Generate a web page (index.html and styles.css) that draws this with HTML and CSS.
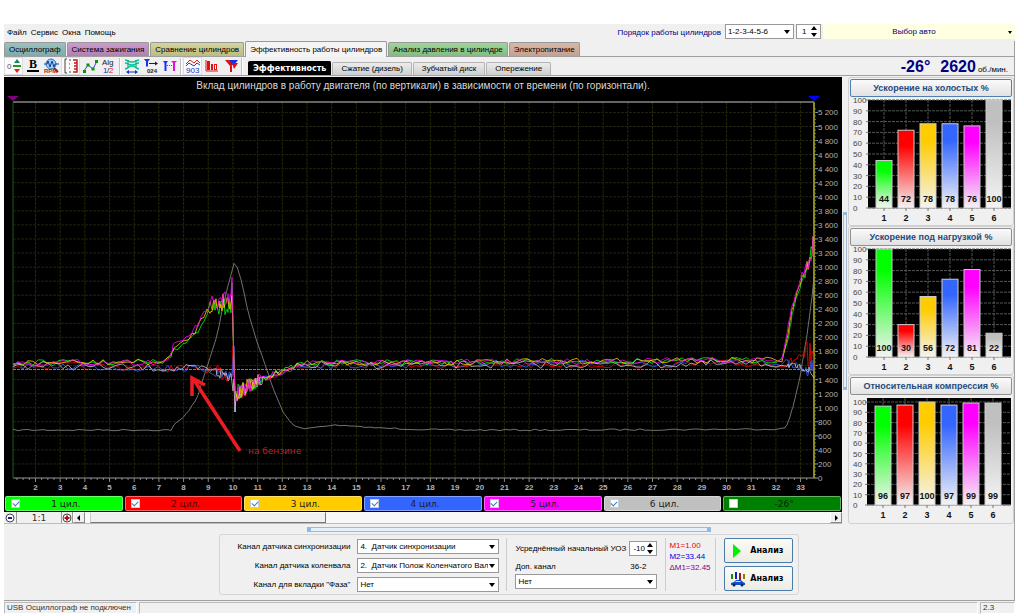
FILE: index.html
```
<!DOCTYPE html>
<html lang="ru">
<head>
  <meta charset="UTF-8">
  <title>USB Осциллограф</title>
  <link rel="stylesheet" href="styles.css">
</head>
<body>
  <div class="app">
    <header class="menubar">
      <nav class="menu">
        <a href="#">Файл</a>
        <a href="#">Сервис</a>
        <a href="#">Окна</a>
        <a href="#">Помощь</a>
      </nav>
      <label class="order-label" for="order">Порядок работы цилиндров</label>
      <span class="select order"><select id="order"><option>1-2-3-4-5-6</option></select></span>
      <span class="spin first"><input id="first" type="text" value="1" aria-label="Первый цилиндр"></span>
      <span class="select car"><select id="car" aria-label="Выбор авто"><option>Выбор авто</option></select></span>
    </header>

    <div class="tabs">
      <button type="button" class="tab teal">Осциллограф</button>
      <button type="button" class="tab violet">Система зажигания</button>
      <button type="button" class="tab olive">Сравнение цилиндров</button>
      <button type="button" class="tab current">Эффективность работы цилиндров</button>
      <button type="button" class="tab green">Анализ давления в цилиндре</button>
      <button type="button" class="tab brown">Электропитание</button>
    </div>

    <div class="toolbar">
      <div class="tools">
        <button type="button" class="tool pressed" aria-label="Ноль">
          <svg viewBox="0 0 16 16"><text x="1" y="11" class="ico-text" fill="#555">0</text><path d="M7 8h8" stroke="#18a018" stroke-width="2"/><path d="M11 1l3 4h-6z" fill="#208060"/><path d="M11 15l3-4h-6z" fill="#e02020"/></svg>
        </button>
        <button type="button" class="tool" aria-label="Жирные линии">
          <svg viewBox="0 0 16 16"><text x="4" y="10" class="ico-bold">B</text><path d="M2 13h12" stroke="#000" stroke-width="2"/></svg>
        </button>
        <button type="button" class="tool" aria-label="Обороты">
          <svg viewBox="0 0 16 16"><circle cx="7" cy="6" r="5" fill="#9ccbf5" stroke="#3878b8"/><path d="M0 6h3l1-3 2 6 2-6 2 6 1-3h4" fill="none" stroke="#1040a0"/><path d="M10 10l4 4" stroke="#604020" stroke-width="2"/><text x="0" y="15" class="ico-rpm">RPM</text></svg>
        </button>
        <button type="button" class="tool pressed" aria-label="Шкала">
          <svg viewBox="0 0 16 16"><path d="M4 1H2v14h2" fill="none" stroke="#444"/><path d="M6 2h2M6 6h1M6 10h1M6 14h2" stroke="#444"/><path d="M10 2h4v3h-3M14 5v3h-3M14 8v3h-3M14 11v3h-4" fill="none" stroke="#c02020" stroke-width="1.500"/></svg>
        </button>
        <button type="button" class="tool" aria-label="Сглаживание">
          <svg viewBox="0 0 16 16"><path d="M2 13l4-6 5 4 4-8" fill="none" stroke="#2050d0"/><path d="M1 12h3v3h-3zM4.500 5.500h3v3h-3zM9.500 9.500h3v3h-3zM13 2h3v3h-3z" fill="#109010"/></svg>
        </button>
        <button type="button" class="tool" aria-label="Алгоритм">
          <svg viewBox="0 0 16 16"><text x="1" y="7" class="ico-text" fill="#222">Alg</text><text x="2" y="15" class="ico-text" fill="#2030d0">1</text><text x="6" y="15" class="ico-text" fill="#222">/</text><text x="8" y="15" class="ico-text" fill="#e02020">2</text></svg>
        </button>
        <i class="sep"></i>
        <button type="button" class="tool" aria-label="Интервал">
          <svg viewBox="0 0 16 16"><path d="M1 2c3 0 3 2 7 2s4-2 7-2M1 5c3 0 3 2 7 2s4-2 7-2M1 11c3 0 3-3 7-3s4 3 7 3" fill="none" stroke="#00c8a0" stroke-width="1.500"/><path d="M4 2v8M12 2v8" stroke="#20a060"/><path d="M4 14h8" stroke="#1030d0"/><path d="M2 14l3-2v4zM14 14l-3-2v4z" fill="#1030d0"/></svg>
        </button>
        <button type="button" class="tool" aria-label="Маркер">
          <svg viewBox="0 0 16 16"><path d="M1 1h6l-2 2.500v5h-2v-5z" fill="#1830f0"/><path d="M6 5.500h8" stroke="#222"/><path d="M15 5.500l-3-2v4z" fill="#222"/><text x="4" y="15" class="ico-rpm dark">024</text></svg>
        </button>
        <button type="button" class="tool" aria-label="Между маркерами">
          <svg viewBox="0 0 16 16"><path d="M1 3h5l-1.500 2v8h-2v-8z" fill="#1830f0"/><path d="M9 3h6l-2 2v8h-2v-8z" fill="#e010e0"/><path d="M5 7.500h6" stroke="#d02060" stroke-dasharray="1 1"/></svg>
        </button>
        <i class="sep"></i>
        <button type="button" class="tool pressed" aria-label="УОЗ">
          <svg viewBox="0 0 16 16"><path d="M1 6l4-4 4 3 3-3 3 3" fill="none" stroke="#e02020"/><path d="M1 8l3-3 5 3 3-3 3 2" fill="none" stroke="#2040d0"/><text x="1" y="15" class="ico-text" fill="#2030c0">903</text></svg>
        </button>
        <button type="button" class="tool" aria-label="Столбцы">
          <svg viewBox="0 0 16 16"><path d="M2 2v11h12" fill="none" stroke="#e01010"/><path d="M3 3h3v9h-3zM7 6h2v6h-2zM10 6h3v6h-3z" fill="#e01010"/><path d="M11.500 7v4" stroke="#fff"/></svg>
        </button>
        <button type="button" class="tool" aria-label="Маркеры">
          <svg viewBox="0 0 16 16"><path d="M4 2h11l-4 5h-3z" fill="#1830f0"/><path d="M2 2h5l2 6v6h-2v-6z" fill="#e01010"/><path d="M9 5h6l-4 6z" fill="#e01010"/></svg>
        </button>
        <i class="sep"></i>
      </div>
      <div class="subtabs">
        <button type="button" class="subtab current">Эффективность</button>
        <button type="button" class="subtab">Сжатие (дизель)</button>
        <button type="button" class="subtab">Зубчатый диск</button>
        <button type="button" class="subtab">Опережение</button>
      </div>
      <div class="readout"><b>-26°</b><b>2620</b><span>об./мин.</span></div>
    </div>

    <main class="main">
      <section class="scope">
        <h1 class="scope-title">Вклад цилиндров в работу двигателя (по вертикали) в зависимости от времени (по горизонтали).</h1>
        <svg id="scope" class="scope-plot" viewBox="0 0 838 402"></svg>
        <div class="channels">
          <label class="channel ch1"><input type="checkbox" checked><span>1 цил.</span></label>
          <label class="channel ch2"><input type="checkbox" checked><span>2 цил.</span></label>
          <label class="channel ch3"><input type="checkbox" checked><span>3 цил.</span></label>
          <label class="channel ch4"><input type="checkbox" checked><span>4 цил.</span></label>
          <label class="channel ch5"><input type="checkbox" checked><span>5 цил.</span></label>
          <label class="channel ch6"><input type="checkbox" checked><span>6 цил.</span></label>
          <label class="channel ch7"><input type="checkbox"><span>-26°</span></label>
        </div>
        <div class="scrollrow">
          <button type="button" class="zoom" aria-label="Уменьшить"><svg viewBox="0 0 10 10"><circle cx="5" cy="5" r="4" fill="#fff" stroke="#444"/><path d="M3 5h4" stroke="#1020a0" stroke-width="2"/></svg></button>
          <span class="ratio">1:1</span>
          <button type="button" class="zoom boxed" aria-label="Увеличить"><svg viewBox="0 0 10 10"><circle cx="5" cy="5" r="4" fill="#fff" stroke="#444"/><path d="M2.500 5h5M5 2.500v5" stroke="#b01010" stroke-width="2"/></svg></button>
          <button type="button" class="arrow" aria-label="Влево"><svg viewBox="0 0 10 10"><path d="M6 2v6l-3-3z"/></svg></button>
          <input class="scroll" type="range" min="0" max="100" value="1" aria-label="Прокрутка">
          <button type="button" class="arrow" aria-label="Вправо"><svg viewBox="0 0 10 10"><path d="M4 2v6l3-3z"/></svg></button>
        </div>
      </section>

      <div class="vsplit"><i class="vgrip"></i></div>

      <aside class="side">
        <section class="panel">
          <button type="button" class="panel-title focused">Ускорение на холостых %</button>
          <svg class="bars" id="idle" viewBox="0 0 162 127"></svg>
        </section>
        <section class="panel">
          <button type="button" class="panel-title">Ускорение под нагрузкой %</button>
          <svg class="bars" id="load" viewBox="0 0 162 127"></svg>
        </section>
        <section class="panel">
          <button type="button" class="panel-title">Относительная компрессия %</button>
          <svg class="bars" id="compression" viewBox="0 0 162 127"></svg>
        </section>
      </aside>
    </main>

    <footer class="bottom">
      <i class="hgrip"></i>
      <div class="settings">
        <div class="sensors">
          <label for="sync">Канал датчика синхронизации</label>
          <span class="select"><select id="sync"><option>4.&nbsp; Датчик синхронизации</option></select></span>
          <label for="crank">Канал датчика коленвала</label>
          <span class="select"><select id="crank"><option>2.&nbsp; Датчик Полож Коленчатого Вал</option></select></span>
          <label for="phase">Канал для вкладки "Фаза"</label>
          <span class="select"><select id="phase"><option>Нет</option></select></span>
        </div>
        <div class="timing">
          <div class="timing-row uoz">
            <label for="uoz">Усреднённый начальный УОЗ</label>
            <span class="spin"><input id="uoz" type="text" value="-10"></span>
          </div>
          <div class="timing-row extra">
            <label for="extra">Доп. канал</label>
            <span>36-2</span>
          </div>
          <span class="select"><select id="extra"><option>Нет</option></select></span>
        </div>
        <div class="markers">
          <div class="m1">M1=1.00</div>
          <div class="m2">M2=33.44</div>
          <div class="md">ΔM1=32.45</div>
        </div>
        <div class="actions">
          <button type="button" class="action"><svg viewBox="0 0 16 16"><path d="M3 1l8 7-8 7z" fill="#00f000"/></svg><span>Анализ</span></button>
          <button type="button" class="action"><svg viewBox="0 0 16 16"><path d="M2 3v5" stroke="#109010" stroke-width="2"/><path d="M6 1v7" stroke="#1020d0" stroke-width="2"/><path d="M10 2v7" stroke="#b01010" stroke-width="2"/><path d="M14 3v5" stroke="#808010" stroke-width="2"/><path d="M1 12l3-1 2-2h5l2 2 2 1v2h-14z" fill="#1050d0"/><path d="M6 10h4l1 1h-6z" fill="#bfe0ff"/><circle cx="4" cy="14" r="1.500" fill="#102040"/><circle cx="12" cy="14" r="1.500" fill="#102040"/></svg><span>Анализ</span></button>
        </div>
      </div>
    </footer>

    <div class="statusbar">
      <span class="status">USB Осциллограф не подключен</span>
      <span class="hint"></span>
      <span class="version">2.3</span>
    </div>
  </div>
  <script src="charts.js"></script>
</body>
</html>
```

FILE: styles.css
```
* { box-sizing: border-box; }
body { margin: 0; padding: 24px 9px 0 4px; background: #fff; color: #000; font: 8px/10px "Liberation Sans", Arial, sans-serif; }
button, input, select { font: inherit; color: inherit; margin: 0; padding: 0; border: none; background: none; border-radius: 0; }
svg { display: block; }
.app { background: #f0f0f0; }

.menubar { display: flex; align-items: flex-start; height: 17px; }
.menu { display: flex; gap: 4px; padding: 4px 3px; flex: 1; }
.menu a { color: #000; text-decoration: none; }
.order-label { color: #000080; padding: 4px 4px 0 0; }

.select { position: relative; display: block; height: 15px; border: 1px solid #999; background: #fff; }
.select select { appearance: none; display: block; width: 100%; height: 100%; padding: 0 10px 0 2px; }
.select::after { content: ""; position: absolute; right: 3px; top: 5px; border: 3px solid transparent; border-top: 4px solid #000; border-bottom: none; pointer-events: none; }
.order { width: 69px; margin-right: 2px; }
.car { width: 192px; border: none; background: #ffffe1; color: #000080; }
.car select { text-align: center; text-align-last: center; padding: 0 18px 0 8px; }
.car::after { right: 3px; top: 7px; border-width: 3px 2px 0; }

.spin { position: relative; display: block; flex-shrink: 0; width: 28px; height: 15px; border: 1px solid #999; background: #fff; }
.spin input { display: block; width: 100%; height: 100%; padding-left: 3px; }
.spin::before, .spin::after { content: ""; position: absolute; right: 3px; border: 3px solid transparent; pointer-events: none; }
.spin::before { top: 1px; border-top: none; border-bottom: 4px solid #000; }
.spin::after { bottom: 1px; border-bottom: none; border-top: 4px solid #000; }
.first { width: 25px; margin-right: 2px; }
.first input { padding-left: 5px; }

.tabs { display: flex; align-items: flex-end; gap: 1px; height: 16px; border-bottom: 1px solid #a0a0a0; border-right: 1px solid #a0a0a0; }
.tab { height: 14px; padding: 0 4px; border: 1px solid #999; border-bottom: none; border-radius: 2px 2px 0 0; white-space: nowrap; }
.teal { background: linear-gradient(#9cc0c0, #80aaaa); }
.violet { background: linear-gradient(#cc9ccc, #b080b0); }
.olive { background: linear-gradient(#d4d49c, #bcbc80); }
.green { background: linear-gradient(#a0d49c, #80bc80); }
.brown { background: linear-gradient(#d8b8a8, #c4a090); }
.tab.current { height: 16px; background: #f4f4f4; margin-bottom: -1px; }

.toolbar { display: flex; height: 19px; border-bottom: 1px solid #a0a0a0; border-right: 1px solid #a0a0a0; }
.tools { display: flex; align-items: center; width: 243px; }
.tool { width: 19px; height: 18px; display: flex; justify-content: center; align-items: center; }
.tool svg { width: 16px; height: 16px; }
.tool.pressed { background: #fbfbfb; border: 1px solid #ddd; }
.sep { width: 2px; height: 17px; margin: 0 1px; border-left: 1px solid #c0c0c0; background: #fff; }
.ico-text { font: 8px "Liberation Sans", sans-serif; }
.ico-bold { font: bold 12px "Liberation Serif", serif; }
.ico-rpm { font: bold 6px "Liberation Sans", sans-serif; fill: #c01818; }
.ico-rpm.dark { fill: #222; }

.subtabs { display: flex; align-items: flex-end; gap: 1px; flex: 1; padding-left: 1px; }
.subtab { height: 13px; padding: 0 8px; border: 1px solid #b4b4b4; border-bottom: none; border-radius: 2px 2px 0 0; background: linear-gradient(#ececec, #cfcfcf); }
.subtab.current { height: 14px; padding: 0 4px; background: #000; border-color: #000; color: #fff; font: bold 8px/10px "DejaVu Sans", sans-serif; }
.readout { display: flex; align-items: baseline; color: #000080; padding-right: 6px; }
.readout b { font-size: 16px; line-height: 19px; margin-right: 10px; }
.readout b + b { margin-right: 2px; }
.readout span { color: #000; font-size: 8px; }

.main { display: flex; border-right: 1px solid #a0a0a0; padding-top: 1px; }
.scope { flex: 1; min-width: 0; background: #000; }
.scope-title { margin: 0; height: 17px; color: #d8d8d8; text-align: center; font: 10px/18px "Liberation Sans", Arial, sans-serif; white-space: nowrap; }
.scope-plot { width: 100%; height: auto; }
.axis-y { font: 8px "Liberation Sans", sans-serif; fill: #b0b0b0; }
.axis-x { font: bold 8px "Liberation Sans", sans-serif; fill: #b0b0b0; text-anchor: middle; }
.note { font: 9px "DejaVu Sans", sans-serif; fill: #c81c24; }

.channels { display: flex; gap: 2px; padding: 0 1px 1px; }
.channel { flex: 1; height: 15px; display: flex; align-items: center; padding-left: 5px; border: 1px solid rgba(255, 255, 255, .4); border-radius: 2px; font: 9px/12px "DejaVu Sans", sans-serif; color: #222; }
.channel input { appearance: none; width: 9px; height: 9px; background: #fff; border: 1px solid #ccc; display: flex; align-items: center; justify-content: center; }
.channel input:checked::before { content: ""; width: 5px; height: 3px; border-left: 1px solid #3080d0; border-bottom: 1px solid #3080d0; transform: rotate(-45deg); margin-top: -2px; }
.channel span { flex: 1; text-align: center; padding-right: 10px; }
.ch1 { background: #00ff00; }
.ch2 { background: #ff0000; color: #500; }
.ch3 { background: #ffcc00; }
.ch4 { background: #3366ff; }
.ch5 { background: #ff00ff; }
.ch6 { background: #c0c0c0; }
.ch7 { background: #008000; color: #002800; }

.scrollrow { display: flex; height: 12px; background: #f0f0f0; border-bottom: 1px solid #bbb; }
.zoom { width: 12px; display: flex; align-items: center; justify-content: center; }
.zoom svg, .arrow svg { width: 10px; height: 10px; }
.boxed { border-left: 1px solid #999; border-right: 1px solid #999; }
.ratio { width: 45px; text-align: center; border-left: 1px solid #999; font: 9px/13px "DejaVu Sans", sans-serif; color: #333; }
.arrow { width: 12px; border: 1px solid; border-color: #fff #888 #888 #fff; display: flex; align-items: center; justify-content: center; }
.scroll { appearance: none; flex: 1; min-width: 0; height: 11px; background: #f8f8f8; }
.scroll::-webkit-slider-thumb { appearance: none; width: 236px; height: 11px; background: #f0f0f0; border: 1px solid; border-color: #fff #777 #777 #ccc; }

.vsplit { width: 6px; display: flex; align-items: center; padding: 0 1px; }
.vgrip { width: 4px; height: 178px; background: #e4f0fa; border: 1px solid #a8b8c8; border-top: 3px solid #8cb8e8; border-bottom: 3px solid #8cb8e8; }
.side { width: 166px; display: flex; flex-direction: column; }
.panel { border: 1px solid #d0d0d0; border-radius: 3px; padding: 1px; }
.panel-title { display: block; width: 100%; height: 18px; border: 1px solid #909090; border-radius: 2px; background: linear-gradient(#fafafa, #e2e2e2); color: #1f4b7c; font-weight: bold; font-size: 9px; line-height: 12px; white-space: nowrap; }
.panel-title.focused { border: 1px solid #5080b0; }
.bars { width: 100%; height: auto; }
.bar-scale { font: 8px "Liberation Sans", sans-serif; fill: #444; }
.bar-num, .bar-value { font: bold 9px "Liberation Sans", sans-serif; fill: #111; text-anchor: middle; }

.bottom { display: flex; flex-direction: column; align-items: center; gap: 2px; padding: 3px 0 5px; border-right: 1px solid #a0a0a0; border-bottom: 1px solid #a0a0a0; }
.hgrip { width: 404px; height: 5px; background: #e4f0fa; border: 1px solid #a8b8c8; border-left: 4px solid #8cb8e8; border-right: 4px solid #8cb8e8; }
.settings { display: flex; gap: 3px; height: 61px; border: 1px solid #d4d4d4; border-radius: 3px; padding: 3px 5px 3px 18px; }
.sensors { display: grid; grid-template-columns: auto 142px; gap: 3px 7px; align-content: start; padding-top: 1px; padding-right: 4px; }
.sensors label { text-align: right; line-height: 16px; }
.timing { width: 160px; border-left: 1px solid #ccc; border-right: 1px solid #ccc; padding: 3px 8px 0 8px; }
.timing-row { display: flex; justify-content: space-between; align-items: center; white-space: nowrap; }
.uoz { height: 15px; }
.extra { height: 18px; padding-right: 11px; padding-top: 3px; }
.markers { line-height: 11px; width: 43px; padding-top: 2px; }
.m1 { color: #f00000; }
.m2 { color: #0000e0; }
.md { color: #800080; }
.actions { display: flex; flex-direction: column; gap: 3px; border-left: 1px solid #ccc; padding-left: 8px; }
.action { width: 69px; height: 25px; display: flex; align-items: center; padding: 0 5px; border: 1px solid #4a7aa8; border-radius: 2px; background: linear-gradient(#fbfbf7, #ecebe4); font: bold 8px/10px "DejaVu Sans", sans-serif; }
.action svg { width: 16px; height: 16px; }
.action span { flex: 1; text-align: center; }

.statusbar { display: flex; gap: 2px; height: 12px; margin-top: 1px; color: #333; }
.statusbar span { border: 1px solid #ccc; border-color: #bbb #fff #fff #bbb; padding-left: 2px; }
.status { width: 133px; }
.hint { flex: 1; }
.version { width: 35px; }
```

FILE: charts.js
```
const NS = 'http://www.w3.org/2000/svg';
const COLORS = ['#00ff00', '#ff0000', '#ffcc00', '#3366ff', '#ff00ff', '#c0c0c0'];

function add(parent, tag, attrs, text) {
  const el = document.createElementNS(NS, tag);
  for (const k in attrs) el.setAttribute(k, attrs[k]);
  if (text !== undefined) el.textContent = text;
  parent.appendChild(el);
  return el;
}

// repeatable noise so the traces look the same on every load
let seed = 7;
function rnd() {
  seed = (seed * 16807) % 2147483647;
  return seed / 2147483647 * 2 - 1;
}

// points: [x, y, noise]
function trace(svg, points, color, opacity, width) {
  let d = '';
  let x = points[0][0];
  let i = 0;
  const end = points[points.length - 1][0];
  while (x <= end) {
    while (i < points.length - 2 && points[i + 1][0] < x) i++;
    const a = points[i], b = points[i + 1];
    const t = (x - a[0]) / (b[0] - a[0] || 1);
    const y = a[1] + (b[1] - a[1]) * t + rnd() * a[2];
    d += (d ? 'L' : 'M') + x + ' ' + y.toFixed(1);
    if (a[2] > 4 || b[0] - a[0] < 4 || x > 780) x += 1;
    else x += x > 290 || x < 160 ? 5 : 3;
  }
  add(svg, 'path', { d, fill: 'none', stroke: color, 'stroke-width': width || 1, opacity, 'stroke-linejoin': 'round' });
}

function drawScope() {
  const svg = document.getElementById('scope');
  const L = 9, R = 810, T = 8, B = 384;
  const X = v => 31.5 + (v - 2) * 24.68;
  const Y = v => B - v * 0.0703;

  for (let v = 2; v <= 33; v++) {
    add(svg, 'line', { x1: X(v), x2: X(v), y1: T, y2: B, stroke: '#26260a', 'stroke-dasharray': '3 1' });
    add(svg, 'text', { x: X(v), y: 396, class: 'axis-x' }, v);
  }
  for (let v = 200; v <= 5200; v += 200) {
    add(svg, 'line', { x1: L, x2: R, y1: Y(v), y2: Y(v), stroke: '#222208', 'stroke-dasharray': '3 1' });
  }
  for (let v = 0; v <= 5200; v += 200) {
    add(svg, 'line', { x1: R, x2: R + 4, y1: Y(v), y2: Y(v), stroke: '#999' });
    add(svg, 'text', { x: R + 4, y: Y(v) + 3, class: 'axis-y' }, v > 999 ? (v / 1000 | 0) + ' ' + String(v % 1000).padStart(3, '0') : v);
  }
  for (let v = 1.25; v < 33.5; v += 0.25) {
    add(svg, 'line', { x1: X(v), x2: X(v), y1: B, y2: B + (v % 1 ? 2 : 4), stroke: '#888' });
  }
  for (let v = 0; v < 5300; v += 50) {
    add(svg, 'line', { x1: R, x2: R + 2, y1: Y(v), y2: Y(v), stroke: '#77773a' });
  }
  add(svg, 'line', { x1: L, x2: R, y1: T, y2: T, stroke: '#c8c8c8' });
  add(svg, 'line', { x1: L, x2: R, y1: B, y2: B, stroke: '#999' });
  add(svg, 'line', { x1: L, x2: L, y1: T, y2: B, stroke: '#186018' });
  add(svg, 'line', { x1: R, x2: R, y1: T, y2: B, stroke: '#8a8a20', 'stroke-width': 2 });
  add(svg, 'path', { d: 'M3 2h12l-6 5z', fill: '#800080' });
  add(svg, 'path', { d: 'M804 2h12l-6 5z', fill: '#0000ff' });

  // crankshaft speed
  trace(svg, [[9, 336, .8], [167, 336, .6], [169, 332, 1], [180, 323, 1], [193, 304, .5], [203, 273, .5], [213, 242, .5],
    [219, 212, .5], [224, 192, .5], [230, 169, .3], [233, 173, .5], [238, 189, .5], [244, 218, .5], [253, 248, .5], [262, 273, .5],
    [269, 294, .5], [279, 318, .5], [289, 331, .5], [299, 335, .4], [329, 331, .4], [376, 334, .8], [440, 336, .8],
    [560, 336, .8], [780, 335, .6], [783, 331, 1], [789, 313, .6], [796, 283, .5], [803, 241, .5], [808, 203, .4], [810, 183, 0]],
    '#8c8c8c', .9, .9);

  const low = [[9, 271, 4], [203, 275, 4], [211, 278, 7], [228, 282, 6]];
  const mix = [[231, 318, 0], [232, 300, 8], [246, 292, 5], [258, 286, 4], [279, 278, 3], [299, 271, 4]];
  trace(svg, low.concat([[229, 251, 0], [230, 285, 0]], mix, [[780, 270, 4], [788, 267, 4], [801, 262, 14], [810, 262, 14]]), COLORS[1], .8);
  trace(svg, low.concat([[229, 262, 0], [230, 252, 0]], mix, [[780, 268, 4], [802, 276, 7], [810, 270, 7]]), COLORS[3], .8);
  trace(svg, low.concat([[229, 294, 0], [230, 285, 0]], mix, [[780, 270, 3], [802, 275, 6], [810, 283, 6]]), '#d8d8d8', .7);

  const after = [[230, 270, 0], [231, 300, 9], [243, 294, 7], [256, 286, 4], [279, 276, 3], [299, 269, 3]];
  const tail = dx => [[778, 266, 1], [783 + dx, 245, 2], [788 + dx, 216, 2], [798 + dx, 183, 6], [806, 166, 8], [810, 143, 0]];
  const rise = dy => [[9, 269, 3], [158, 268, 2], [166, 264, 2], [169, 254 + dy, 2], [183, 245 + dy, 3], [193, 234 + dy, 4]];
  trace(svg, rise(3).concat([[204, 216, 9], [227, 212, 10], [228, 196, 0]], after, tail(1)), COLORS[0], .8);
  trace(svg, rise(1).concat([[204, 212, 9], [227, 206, 10], [228, 200, 0]], after, tail(0)), COLORS[2], .8);
  trace(svg, rise(-2).concat([[204, 213, 10], [227, 205, 10], [228, 191, 0]], after, tail(-1)), COLORS[4], .8);

  add(svg, 'line', { x1: L, x2: R, y1: 275.5, y2: 275.5, stroke: '#20a8a8', 'stroke-dasharray': '3 1' });
  add(svg, 'path', { d: 'M236 357L190 286M188 302V284L201 291', fill: 'none', stroke: '#ed1c24', 'stroke-width': 3.5 });
  add(svg, 'text', { x: 244, y: 360, class: 'note' }, 'на бензине');
}

function drawBars(id, values, left, bottom, full) {
  const svg = document.getElementById(id);
  const top = 3, right = 161;
  const defs = add(svg, 'defs', {});
  add(svg, 'rect', { x: left, y: top, width: right - left, height: bottom - top, fill: '#000' });
  for (let p = 0; p <= 100; p += 10) {
    const y = bottom - full * p / 100;
    add(svg, 'line', { x1: left, x2: right, y1: y, y2: y, stroke: '#555', 'stroke-dasharray': '3 1' });
    add(svg, 'line', { x1: left - 2, x2: left, y1: y, y2: y, stroke: '#777' });
    add(svg, 'text', { x: 3, y: y + 3, class: 'bar-scale' }, p);
  }
  add(svg, 'line', { x1: left, x2: right, y1: bottom, y2: bottom, stroke: '#888' });
  values.forEach((v, i) => {
    const x = left + 16 + i * 22;
    const h = full * v / 100;
    const g = add(defs, 'linearGradient', { id: id + i, x1: 0, y1: 0, x2: 0, y2: 1 });
    add(g, 'stop', { offset: '20%', 'stop-color': COLORS[i] });
    add(g, 'stop', { offset: '100%', 'stop-color': '#f4f4f4' });
    add(svg, 'line', { x1: x, x2: x, y1: top, y2: bottom, stroke: '#555', 'stroke-dasharray': '3 1' });
    add(svg, 'rect', { x: x - 8, y: bottom - h, width: 16, height: h, fill: `url(#${id + i})`, stroke: '#ccc' });
    add(svg, 'text', { x, y: bottom - 6, class: 'bar-value' }, v);
    add(svg, 'line', { x1: x, x2: x, y1: bottom, y2: bottom + 3, stroke: '#777' });
    add(svg, 'text', { x, y: bottom + 13, class: 'bar-num' }, i + 1);
  });
}

drawScope();
drawBars('idle', [44, 72, 78, 78, 76, 100], 18, 111, 108);
drawBars('load', [100, 30, 56, 72, 81, 22], 18, 111, 108);
drawBars('compression', [96, 97, 100, 97, 99, 99], 17, 110, 103);
```
